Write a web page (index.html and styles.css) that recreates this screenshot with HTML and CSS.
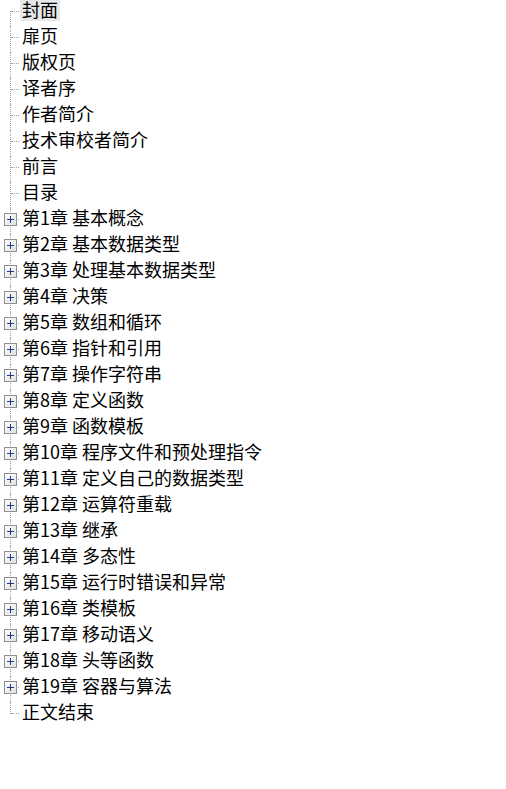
FILE: index.html
```html
<!DOCTYPE html>
<html>
<head>
<meta charset="utf-8">
<link rel="stylesheet" href="styles.css">
</head>
<body>
<ul class="tree">
  <li class="node first"><span class="conn"></span><span class="label selected">封面</span></li>
  <li class="node"><span class="conn"></span><span class="label">扉页</span></li>
  <li class="node"><span class="conn"></span><span class="label">版权页</span></li>
  <li class="node"><span class="conn"></span><span class="label">译者序</span></li>
  <li class="node"><span class="conn"></span><span class="label">作者简介</span></li>
  <li class="node"><span class="conn"></span><span class="label">技术审校者简介</span></li>
  <li class="node"><span class="conn"></span><span class="label">前言</span></li>
  <li class="node"><span class="conn"></span><span class="label">目录</span></li>
  <li class="node"><span class="conn"><span class="box"></span></span><span class="label">第1章 基本概念</span></li>
  <li class="node"><span class="conn"><span class="box"></span></span><span class="label">第2章 基本数据类型</span></li>
  <li class="node"><span class="conn"><span class="box"></span></span><span class="label">第3章 处理基本数据类型</span></li>
  <li class="node"><span class="conn"><span class="box"></span></span><span class="label">第4章 决策</span></li>
  <li class="node"><span class="conn"><span class="box"></span></span><span class="label">第5章 数组和循环</span></li>
  <li class="node"><span class="conn"><span class="box"></span></span><span class="label">第6章 指针和引用</span></li>
  <li class="node"><span class="conn"><span class="box"></span></span><span class="label">第7章 操作字符串</span></li>
  <li class="node"><span class="conn"><span class="box"></span></span><span class="label">第8章 定义函数</span></li>
  <li class="node"><span class="conn"><span class="box"></span></span><span class="label">第9章 函数模板</span></li>
  <li class="node"><span class="conn"><span class="box"></span></span><span class="label">第10章 程序文件和预处理指令</span></li>
  <li class="node"><span class="conn"><span class="box"></span></span><span class="label">第11章 定义自己的数据类型</span></li>
  <li class="node"><span class="conn"><span class="box"></span></span><span class="label">第12章 运算符重载</span></li>
  <li class="node"><span class="conn"><span class="box"></span></span><span class="label">第13章 继承</span></li>
  <li class="node"><span class="conn"><span class="box"></span></span><span class="label">第14章 多态性</span></li>
  <li class="node"><span class="conn"><span class="box"></span></span><span class="label">第15章 运行时错误和异常</span></li>
  <li class="node"><span class="conn"><span class="box"></span></span><span class="label">第16章 类模板</span></li>
  <li class="node"><span class="conn"><span class="box"></span></span><span class="label">第17章 移动语义</span></li>
  <li class="node"><span class="conn"><span class="box"></span></span><span class="label">第18章 头等函数</span></li>
  <li class="node"><span class="conn"><span class="box"></span></span><span class="label">第19章 容器与算法</span></li>
  <li class="node last"><span class="conn"></span><span class="label">正文结束</span></li>
</ul>
</body>
</html>
```
FILE: styles.css
```css
html, body {
  margin: 0;
  padding: 0;
  background: #ffffff;
}
.tree {
  list-style: none;
  margin: 0;
  padding: 0;
  font-family: "Noto Sans CJK SC", "Noto Sans", sans-serif;
  font-size: 18px;
  color: #000000;
}
.node {
  display: flex;
  height: 26px;
  align-items: flex-start;
}
.conn {
  position: relative;
  width: 20px;
  height: 26px;
  flex: none;
}
.conn::before {
  content: "";
  position: absolute;
  left: 10px;
  top: 0;
  bottom: 0;
  border-left: 1px dotted #a0a0a0;
}
.first .conn::before {
  top: 11px;
}
.last .conn::before {
  bottom: 14px;
}
.conn::after {
  content: "";
  position: absolute;
  left: 11px;
  width: 8px;
  top: 11px;
  border-top: 1px dotted #a0a0a0;
}
.box {
  position: absolute;
  z-index: 1;
  left: 4px;
  top: 5px;
  width: 11px;
  height: 11px;
  border: 1px solid #8e8f8f;
  background: linear-gradient(135deg, #ffffff 0%, #e0e0e0 100%);
}
.box::before {
  content: "";
  position: absolute;
  left: 2px;
  right: 2px;
  top: 5px;
  height: 1px;
  background: #1e3c84;
}
.box::after {
  content: "";
  position: absolute;
  top: 2px;
  bottom: 2px;
  left: 5px;
  width: 1px;
  background: #1e3c84;
}
.label {
  display: block;
  line-height: 18px;
  padding: 0 2px 3px;
  white-space: nowrap;
}
.selected {
  background: #e8e8e8;
}
```
